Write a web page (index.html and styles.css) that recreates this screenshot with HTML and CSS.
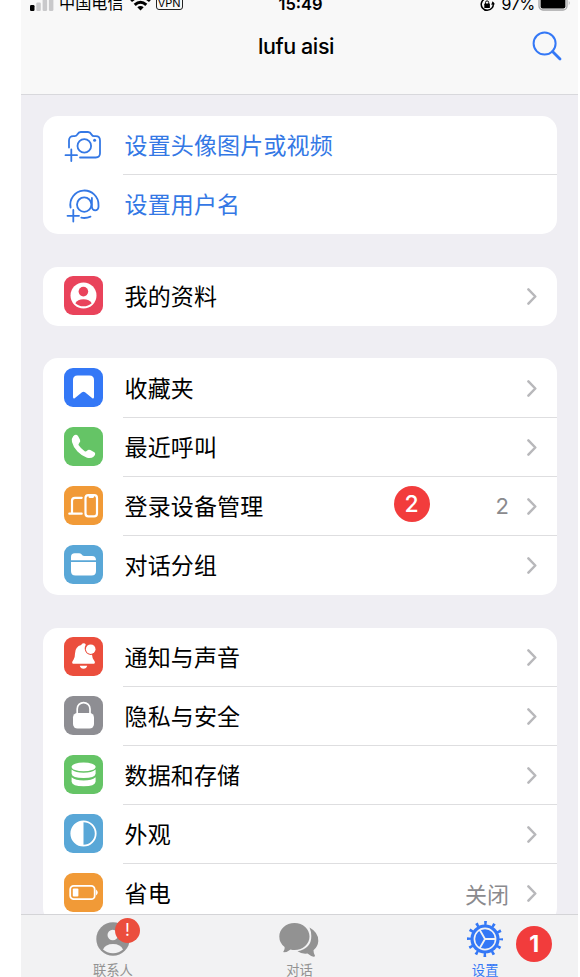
FILE: index.html
```html
<!DOCTYPE html>
<html lang="zh-CN">
<head>
    <meta charset="UTF-8">
    <meta name="viewport" content="width=device-width, initial-scale=1.0">
    <title>设置</title>
    <link rel="stylesheet" href="styles.css">
</head>
<body>
    <svg class="symbols" width="0" height="0">
        <symbol id="chevron" viewBox="0 0 10 17">
            <path d="M1.4 1.4 L8.3 8.5 L1.4 15.6" fill="none" stroke="currentColor" stroke-width="2.5" stroke-linecap="round" stroke-linejoin="round"/>
        </symbol>
    </svg>

    <div class="phone">
        <header>
            <div class="status-bar">
                <div class="status-left">
                    <svg class="signal" width="24" height="17" viewBox="0 0 24 17">
                        <rect x="0" y="11" width="4.5" height="6" rx="1.2"/>
                        <g fill="#c9c9cb">
                            <rect x="6.3" y="8.5" width="4.5" height="8.5" rx="1.2"/>
                            <rect x="12.6" y="5" width="4.5" height="12" rx="1.2"/>
                            <rect x="18.9" y="1" width="4.5" height="16" rx="1.2"/>
                        </g>
                    </svg>
                    <span class="carrier">中国电信</span>
                    <svg class="wifi" width="21" height="16" viewBox="0 0 21 16">
                        <g fill="none" stroke="#000" stroke-width="3">
                            <path d="M1 6 Q10.5 -2.5 20 6"/>
                            <path d="M4.7 9.9 Q10.5 4.7 16.3 9.9"/>
                        </g>
                        <path d="M7.3 12.3 Q10.5 9.8 13.7 12.3 L10.5 15.6 Z"/>
                    </svg>
                    <span class="vpn">VPN</span>
                </div>
                <span class="time">15:49</span>
                <div class="status-right">
                    <svg width="15" height="15" viewBox="0 0 15 15">
                        <path d="M10.5 2.3 A6 6 0 1 0 13 5.6" fill="none" stroke="#000" stroke-width="1.5"/>
                        <path d="M11.2 7.8 L15 7.2 L12.6 4.3 Z"/>
                        <rect x="4.3" y="6.6" width="5.6" height="4.4" rx=".6"/>
                        <path d="M5.5 7 V5.5 a1.6 1.6 0 0 1 3.2 0 V7" fill="none" stroke="#000"/>
                    </svg>
                    <span class="percent">97%</span>
                    <svg class="battery" width="33" height="16" viewBox="0 0 33 16">
                        <rect x="1" y="1" width="28" height="14" rx="4" fill="none" stroke="#a5a5a7" stroke-width="1.3"/>
                        <rect x="2.6" y="2.6" width="24.8" height="10.8" rx="2"/>
                        <path d="M30.8 5.5 q1.8 2.5 0 5 Z" fill="#a5a5a7"/>
                    </svg>
                </div>
            </div>
            <div class="title-bar">
                <h1>lufu aisi</h1>
                <svg class="search" width="30" height="30" viewBox="0 0 30 30">
                    <circle cx="12.6" cy="12.6" r="11" fill="none" stroke="currentColor" stroke-width="2"/>
                    <path d="M20.5 20.5 L28 28" stroke="currentColor" stroke-width="2.8" stroke-linecap="round"/>
                </svg>
            </div>
        </header>

        <main>
            <section class="card">
                <div class="row link">
                    <svg class="outline" viewBox="0 0 39 39">
                        <path d="M5 21.5 V14.5 Q5 10.2 9.3 10.2 H10.5 Q12.3 10.2 13.3 8.5 Q14.6 6 16.8 6 H24 Q26.2 6 27.5 8.5 Q28.4 10.2 30.2 10.2 H31.8 Q36 10.2 36 14.5 V27.3 Q36 31.5 31.8 31.5 H16"/>
                        <circle cx="20.3" cy="19.9" r="6.8"/>
                        <circle cx="30.6" cy="14.2" r="1.5" fill="currentColor" stroke="none"/>
                        <path d="M7.3 23.5 V35 M1.5 29.2 H13"/>
                    </svg>
                    <div class="cell"><span class="label">设置头像图片或视频</span></div>
                </div>
                <div class="row link">
                    <svg class="outline" viewBox="0 0 39 39">
                        <path d="M6.6 22.5 A14.1 14.1 0 1 1 34.5 20 V22 A3.3 3.3 0 0 1 27.9 22 V13"/>
                        <circle cx="20.2" cy="19.6" r="7.2"/>
                        <path d="M17.3 32.7 Q22 33.6 26.5 31.7"/>
                        <path d="M9.3 25 V36.6 M3.5 30.8 H15"/>
                    </svg>
                    <div class="cell"><span class="label">设置用户名</span></div>
                </div>
            </section>

            <section class="card">
                <div class="row">
                    <svg class="icon crimson" viewBox="0 0 39 39">
                        <circle cx="19.5" cy="19.5" r="13"/>
                        <g class="hole">
                            <circle cx="19.4" cy="15.6" r="4.8"/>
                            <path d="M11.3 27.2 Q13.5 23.3 19.5 23.3 T27.7 27.2 Q24.3 30.3 19.5 30.3 T11.3 27.2 Z"/>
                        </g>
                    </svg>
                    <div class="cell"><span class="label">我的资料</span><svg class="chevron"><use href="#chevron"/></svg></div>
                </div>
            </section>

            <section class="card">
                <div class="row">
                    <svg class="icon blue" viewBox="0 0 39 39">
                        <path d="M9 12 Q9 7.5 13.5 7.5 H25.5 Q30 7.5 30 12 V29 Q30 31.3 28 29.9 L21 24.3 Q19.5 23.2 18 24.3 L11 29.9 Q9 31.3 9 29 Z"/>
                    </svg>
                    <div class="cell"><span class="label">收藏夹</span><svg class="chevron"><use href="#chevron"/></svg></div>
                </div>
                <div class="row">
                    <svg class="icon green" viewBox="0 0 39 39">
                        <path d="M9.2 9.2 Q12 6.5 14 9 L15.9 12.6 Q16.9 14.5 15.3 16 Q14 17.2 14.7 18.3 Q17 21.7 20.7 24.2 Q21.9 24.9 23 23.7 Q24.5 22.2 26.3 23.1 L30.3 25.3 Q32.3 26.9 29.8 29.5 Q27 32 22.5 30.6 Q18 29 13.5 24.5 Q9 19.7 8 15 Q7.4 11 9.2 9.2 Z"/>
                    </svg>
                    <div class="cell"><span class="label">最近呼叫</span><svg class="chevron"><use href="#chevron"/></svg></div>
                </div>
                <div class="row">
                    <svg class="icon orange" viewBox="0 0 39 39">
                        <g fill="none" stroke="#fff" stroke-width="2.2" stroke-linecap="round">
                            <path d="M17.7 11.8 H11 Q8 11.8 8 14.8 V27.5 M5.3 27.7 H17.7"/>
                            <rect x="21.5" y="9.2" width="11.5" height="21.2" rx="2.8"/>
                        </g>
                        <path d="M24.5 9 H30 V10.5 Q30 12 28.5 12 H26 Q24.5 12 24.5 10.5 Z"/>
                    </svg>
                    <div class="cell">
                        <span class="label">登录设备管理</span>
                        <span class="step step-row">2</span>
                        <span class="value">2</span><svg class="chevron"><use href="#chevron"/></svg>
                    </div>
                </div>
                <div class="row">
                    <svg class="icon sky" viewBox="0 0 39 39">
                        <path d="M7 15.3 V12 Q7 8.3 10.7 8.3 H15 Q16.5 8.3 17.5 9.3 L18.3 10.3 Q19 11 20.3 11 H28 Q32 11 32 15.3 Z"/>
                        <path d="M7 17 H32 V26 Q32 30.5 27.5 30.5 H11.5 Q7 30.5 7 26 Z"/>
                    </svg>
                    <div class="cell"><span class="label">对话分组</span><svg class="chevron"><use href="#chevron"/></svg></div>
                </div>
            </section>

            <section class="card">
                <div class="row">
                    <svg class="icon red" viewBox="0 0 39 39">
                        <path d="M19.5 6.3 Q21.2 6.3 21.8 7.7 Q20.5 9.5 20.7 12 Q21.3 17.3 26.5 17.9 L28 17.8 Q28.3 21 29.6 22.8 L30.7 24.4 Q31.5 26.7 29 26.7 H10 Q7.5 26.7 8.4 24.4 L9.5 22.8 Q11 20.5 11 16.5 Q11.2 9.5 17.2 8 Q17.8 6.3 19.5 6.3 Z"/>
                        <circle cx="26.7" cy="12.2" r="4.8"/>
                        <path d="M15.8 28.8 H23.2 Q22.5 31.8 19.5 31.8 T15.8 28.8 Z"/>
                    </svg>
                    <div class="cell"><span class="label">通知与声音</span><svg class="chevron"><use href="#chevron"/></svg></div>
                </div>
                <div class="row">
                    <svg class="icon grey" viewBox="0 0 39 39">
                        <path d="M13.2 18 V13 a6.4 6.4 0 0 1 12.8 0 V18" fill="none" stroke="#fff" stroke-width="1.7"/>
                        <rect x="9" y="17" width="21" height="15.5" rx="4.5"/>
                    </svg>
                    <div class="cell"><span class="label">隐私与安全</span><svg class="chevron"><use href="#chevron"/></svg></div>
                </div>
                <div class="row">
                    <svg class="icon green" viewBox="0 0 39 39">
                        <ellipse cx="19.6" cy="11.9" rx="12" ry="4.3"/>
                        <path d="M7.6 14.5 Q11.5 17.8 19.6 17.8 T31.6 14.5 V18.7 Q31 23 19.6 23 T7.6 18.7 Z"/>
                        <path d="M7.6 22.3 Q11.5 25.5 19.6 25.5 T31.6 22.3 V26.8 Q31 31.3 19.6 31.3 T7.6 26.8 Z"/>
                    </svg>
                    <div class="cell"><span class="label">数据和存储</span><svg class="chevron"><use href="#chevron"/></svg></div>
                </div>
                <div class="row">
                    <svg class="icon sky" viewBox="0 0 39 39">
                        <circle cx="19.5" cy="19.5" r="12.2" fill="none" stroke="#fff" stroke-width="1.8"/>
                        <path d="M19.5 7 A12.5 12.5 0 0 0 19.5 32 Z"/>
                    </svg>
                    <div class="cell"><span class="label">外观</span><svg class="chevron"><use href="#chevron"/></svg></div>
                </div>
                <div class="row">
                    <svg class="icon orange" viewBox="0 0 39 39">
                        <rect x="6.2" y="12.9" width="24.5" height="13.3" rx="3.5" fill="none" stroke="#fff" stroke-width="1.8"/>
                        <rect x="8.8" y="15.6" width="5.6" height="8" rx="1"/>
                        <path d="M32 16.5 Q35.5 19.5 32 22.6 Z"/>
                    </svg>
                    <div class="cell"><span class="label">省电</span><span class="value">关闭</span><svg class="chevron"><use href="#chevron"/></svg></div>
                </div>
            </section>
        </main>

        <nav class="tab-bar">
            <div class="tab">
                <div class="tab-icon">
                    <svg width="40" height="38" viewBox="0 0 40 38">
                        <circle cx="20" cy="19" r="16.7"/>
                        <g class="hole">
                            <circle cx="19.8" cy="15" r="5.3"/>
                            <path d="M10 29.5 Q12.5 24 20 24 T30 29.5 Q26 33.2 20 33.2 T10 29.5 Z"/>
                        </g>
                    </svg>
                    <span class="alert">!</span>
                </div>
                <span>联系人</span>
            </div>
            <div class="tab">
                <div class="tab-icon">
                    <svg width="40" height="38" viewBox="0 0 40 38">
                        <path d="M30.5 7.5 Q39.7 12.5 39.3 21 Q39 26.5 34.5 30.3 Q34.5 34 36 35.8 Q36 36.8 34.5 36.7 Q31.5 36 28.5 33.5 Q22.5 34.2 18.5 31.3 Q32.5 28.5 32.3 16 Q32.3 11.5 30.5 7.5 Z"/>
                        <path d="M15.5 3 C24 3 30.5 9 30.5 16.5 S24 30 15.5 30 Q13.5 30 11.5 29.5 Q8.5 32.2 4.8 32.3 Q3.6 32 4.7 31 Q6 29.3 5.6 27 Q.3 23 .3 16.5 C.3 9 7 3 15.5 3 Z"/>
                    </svg>
                </div>
                <span>对话</span>
            </div>
            <div class="tab active">
                <div class="tab-icon">
                    <svg width="40" height="38" viewBox="0 0 40 38">
                        <circle cx="20" cy="19" r="16" fill="none" stroke="currentColor" stroke-width="4" stroke-dasharray="2.6 5.778" stroke-dashoffset="1.3"/>
                        <circle cx="20" cy="19" r="14.6"/>
                        <circle cx="20" cy="19" r="10.6" fill="none" stroke="#f2f2f3" stroke-width="1.6"/>
                        <path d="M20 19 H30.5 M20 19 L14.8 10 M20 19 L14.8 28" stroke="#f2f2f3" stroke-width="1.8"/>
                    </svg>
                    <span class="step step-tab">1</span>
                </div>
                <span>设置</span>
            </div>
        </nav>
    </div>
</body>
</html>
```

FILE: styles.css
```css
* {
    box-sizing: border-box;
}
body {
    margin: 0;
    background-color: #fff;
    color: #000;
    font-family: Inter, 'Noto Sans CJK SC', sans-serif;
    overflow: hidden;
}
svg {
    display: block;
    flex: none;
}
.symbols {
    display: none;
}
.phone {
    display: flex;
    flex-direction: column;
    width: 557px;
    height: 977px;
    margin-left: 21px;
    background-color: #efeef3;
}
header {
    height: 95px;
    background-color: #f8f8f8;
    border-bottom: 1px solid #d8d8dc;
}
.status-bar {
    display: grid;
    grid-template-rows: 8px;
    grid-template-columns: 1fr auto 1fr;
    align-items: center;
    height: 8px;
    padding: 0 7px 0 9px;
    line-height: 20px;
}
.status-left, .status-right {
    display: flex;
    align-items: center;
    height: 8px;
}
.status-right {
    justify-content: flex-end;
}
.signal {
    margin-top: -4px;
}
.carrier {
    margin-top: -2px;
    margin-left: 5px;
    font-size: 16.2px;
}
.wifi {
    margin: -3px 5px 0 6px;
}
.vpn {
    height: 14px;
    margin-top: -2px;
    padding: 0 1px;
    border: 1px solid #222;
    border-radius: 3px;
    font-size: 11px;
    line-height: 12px;
}
.time {
    font-size: 16.5px;
    font-weight: 600;
}
.percent {
    margin: 0 3px 0 7px;
    font-size: 16px;
    letter-spacing: -0.3px;
}
.battery {
    margin-top: -3px;
}
.title-bar {
    display: grid;
    grid-template-columns: 1fr auto 1fr;
    align-items: center;
    height: 76px;
    padding-right: 16px;
    padding-left: 9px;
}
h1 {
    grid-column: 2;
    margin: 0;
    font-size: 21.5px;
    font-weight: 500;
    letter-spacing: -0.4px;
}
.search {
    justify-self: end;
    color: #3478f6;
}
main {
    display: flex;
    flex: 1;
    flex-direction: column;
    gap: 32.7px;
    min-height: 0;
    padding: 20.8px 21.5px 0;
    overflow: hidden;
}
.card {
    flex: none;
    border-radius: 15px;
    background-color: #fff;
}
.row {
    display: flex;
    align-items: center;
    height: 59.1px;
    padding-left: 21.5px;
}
.icon, .outline {
    width: 39px;
    height: 39px;
}
.icon {
    margin-bottom: 1px;
    border-radius: 9px;
    fill: #fff;
}
.outline {
    fill: none;
    stroke: currentColor;
    stroke-width: 1.8;
    stroke-linecap: round;
    stroke-linejoin: round;
}
.crimson { background-color: #e9435b; }
.crimson .hole { fill: #e9435b; }
.blue { background-color: #3478f6; }
.green { background-color: #65c466; }
.orange { background-color: #f19a37; }
.sky { background-color: #59a7d7; }
.red { background-color: #eb4e3d; }
.grey { background-color: #8e8e93; }
.link {
    color: #3478e5;
}
.cell {
    position: relative;
    display: flex;
    flex: 1;
    align-items: center;
    align-self: stretch;
    margin-left: 19.5px;
    padding: 0 20px 0 2px;
    border-bottom: 1px solid #dedee0;
}
.row:last-child .cell {
    border-bottom-color: transparent;
}
.label {
    flex: 1;
    padding-bottom: 2px;
    font-size: 23px;
    letter-spacing: 0.15px;
}
.value {
    color: #8a8a8e;
    font-size: 22px;
}
.chevron {
    width: 10px;
    height: 17px;
    margin-top: 1px;
    margin-left: 17.5px;
    color: #b8b8bb;
}
/* numbered walkthrough markers */
.step {
    position: absolute;
    display: flex;
    align-items: center;
    justify-content: center;
    width: 36px;
    height: 36px;
    border-radius: 50%;
    background-color: #f23c3c;
    color: #fff;
    font-size: 23px;
    font-weight: 500;
}
.step-row {
    top: 9px;
    right: 127px;
}
.step-tab {
    top: 6px;
    left: 51px;
    font-weight: 700;
}
.tab-bar {
    display: grid;
    grid-template-columns: repeat(3, 1fr);
    height: 63px;
    padding-top: 5px;
    border-top: 1px solid #d4d4d7;
    background-color: #f2f2f3;
    color: #929292;
}
.tab {
    display: flex;
    flex-direction: column;
    align-items: center;
    font-size: 13.3px;
    line-height: 24px;
}
.tab:first-child {
    padding-right: 2px;
}
.tab svg {
    fill: currentColor;
}
.tab .hole {
    fill: #f2f2f3;
}
.tab-icon {
    position: relative;
}
.active {
    color: #3478f6;
}
.alert {
    position: absolute;
    top: -2px;
    left: 22px;
    width: 25px;
    height: 25px;
    border-radius: 50%;
    background-color: #eb4e3d;
    color: #fff;
    font-size: 17px;
    line-height: 25px;
    text-align: center;
}
```
